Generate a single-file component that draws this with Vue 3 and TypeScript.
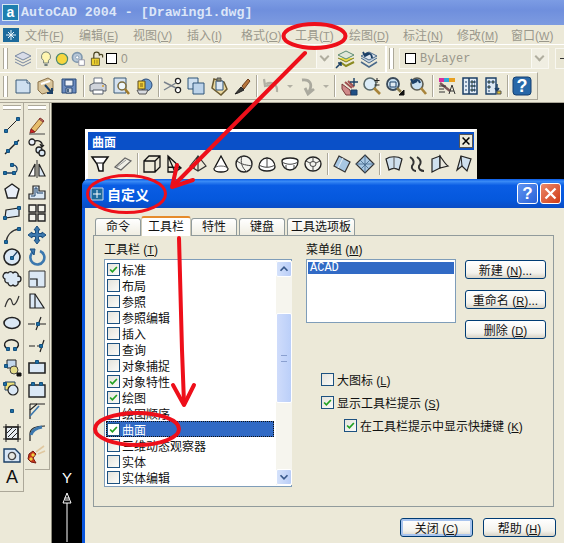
<script setup lang="ts">
import { h } from 'vue'

interface Shape {
  d?: string
  fill: string
  stroke: string
  w: number
  text?: string
}

// path helpers for the toolbar icons
const p = (d: string, fill = 'none', stroke = '#222', w = 1): Shape => ({ d, fill, stroke, w })
const c = (x: number, y: number, r: number) => `M${x - r} ${y}a${r} ${r} 0 1 0 ${r * 2} 0a${r} ${r} 0 1 0 ${-r * 2} 0z`
const n = (x: number, y: number): Shape => p(`M${x - 1.5} ${y - 1.5}h3v3h-3z`, '#1c6ea4', '#14507e')
const t = (text: string, fill: string): Shape => ({ text, fill, stroke: 'none', w: 0 })
const LIGHT = '#dbe8f5'
const NAVY = '#1b3f66'

const icons: Record<string, Shape[]> = {
  layers: [p('M2 13L10 17L18 13', 'none', '#7888a0'), p('M2 10L10 14L18 10', 'none', '#7888a0'), p('M2 7L10 3L18 7L10 11Z', '#d8dce8', '#7888a0')],
  bulb: [p('M10 1a6 6 0 0 1 3 11v3H7v-3a6 6 0 0 1 3-11z', '#fff6b0', '#566'), p('M8 17.5h4', 'none', '#566', 2)],
  sun: [p(c(10, 10, 7), '#f6d63e', '#4f8a70', 1.5)],
  freeze: [p(c(9, 8, 6), '#b8c8d8', '#7f97ad', 2), p(c(9, 8, 2), '#fff', '#7f97ad'), p('M11 11h7v7h-7z', '#fff', '#889')],
  lock: [p('M3 9h10v9H3z', '#efd22e', '#4a4420'), p('M6 9V5a3 3 0 0 1 7 0a3 3 0 0 1 4 0v3', 'none', '#4a4420', 1.5), p('M7 11v5M10 11v5', 'none', '#8a7a20')],
  layerSet: [p('M5 13L11 17L19 13', 'none', '#8a8a20', 2), p('M3 9L11 13L19 9', '#eadb44', '#7a7a20'), p('M3 6L11 2L19 6L11 10Z', '#e0e6d8', '#5a8a70'), p('M1 19L6 14M3 14H6V17', 'none', NAVY, 1.5)],
  layerPrev: [p('M2 13L10 18L18 13', 'none', '#4a6a8a', 1.5), p('M2 9L10 14L18 9', '#c5d3e0', '#4a6a8a'), p('M2 7L10 3L18 7L10 11Z', '#dfe6ee', '#4a6a8a'), p('M13 9C13 4 8 3 6 6M4 3L6 7L10 5', 'none', NAVY, 1.8)],
  newDoc: [p('M3 4H14L17 7V17H3Z', '#cfe0f0', '#3a5a78'), p('M14 4V7H17', '#fff', '#3a5a78')],
  open: [p('M2 6L12 2L17 5V15L6 18L2 14Z', '#d8c49a', '#8a7048'), p('M5 8L14 5', 'none', '#fff', 2), p('M9 9L16 17M16 12V17H11', 'none', NAVY, 2)],
  save: [p('M3 3H17V17H3Z', '#6c8cc0', '#2a4a78'), p('M6 4H14V10H6Z', '#eef2f8', '#2a4a78'), p('M7 12H13V17H7Z', '#cdd6e2', '#2a4a78'), p('M9 13v3', 'none', NAVY, 1.5)],
  print: [p('M6 2H14V8H6Z', '#fff', '#6a7484'), p('M2 9L6 7H14L18 9V15H2Z', '#cfd3da', '#565e6a'), p('M5 14H15V18H5Z', '#fff', '#565e6a'), p('M14 10h2', 'none', '#d8a030', 1.5)],
  preview: [p('M3 2H15V17H3Z', '#d5e2ef', '#3a5a78'), p(c(11, 10, 4), '#eef6fb', '#7a6a3a', 1.5), p('M14 13L18 18', 'none', '#a07a2a', 2.5)],
  publish: [p(c(12, 9, 6), '#6c9cd0', '#2a4a78'), p('M4 5H11V13H4Z', '#f0cf3a', '#5a4a20'), p('M3 14H14L12 18H5Z', '#d8dbe0', '#555'), p('M6 8h3M6 10h3', 'none', '#7a5a10')],
  cut: [p(c(15, 5, 2.6), '#fff', '#222', 1.3), p(c(15, 14, 2.6), '#fff', '#222', 1.3), p('M1 6L13 12M1 14L13 7', 'none', '#7a828c', 1.4)],
  copy: [p('M2 2H12V13H2Z', '#cfe0f0', '#2f5578'), p('M7 7H18V18H7Z', '#bcd3ea', '#2f5578')],
  paste: [p('M5 3L15 6L18 13L12 19L3 12Z', '#ecd9a0', '#6a5a30', 1.5), p('M7 5H14V14H7Z', '#dce8f3', '#2f5578'), p('M8 2h4v3H8z', '#8a8a70', '#555')],
  match: [p('M3 18L9 11L12 14L6 17Z', '#3a3a38', '#222'), p('M10 10L16 3L18 5L12 13Z', '#b8763a', '#6a3a1a')],
  undoGrey: [p('M16 16C17 8 10 5 5 8M3 3L4 10L11 9', 'none', '#b2b0a4', 2.2)],
  redoGrey: [p('M5 4C13 3 16 8 12 16M8 12L11 18L17 13', 'none', '#aaa99e', 2.8)],
  pan: [p('M3 8L11 14L12 19H7L3 13Z', '#d08a8a', '#7a3a3a'), p('M6 6L13 12M9 5L15 11', 'none', '#a05050', 2), p('M15 2v8M11 6h8', 'none', NAVY, 1.4), p('M12 14h6v5h-6z', '#1f4f86', NAVY)],
  zoomRt: [p(c(8, 8, 6), '#dcecf7', '#5a6a6a', 1.6), p('M12 12L18 18', 'none', '#a8843a', 2.6), p('M15 2v5M12.5 4.5h5M12.5 9h5', 'none', '#222', 1)],
  zoomWin: [p(c(8, 8, 6), '#c8dff0', '#3a4a5a', 1.8), p('M5 6h6v5H5z', '#dfeaf2', '#1b3f66'), p('M12 12L16 16', 'none', '#8a7a4a', 2.5), p('M14 19L19 14V19Z', '#111', '#111')],
  zoomPrev: [p(c(9, 8, 6), '#c8dff0', '#5a5a50', 1.6), p('M13 12L18 18', 'none', '#a8843a', 2.6), p('M12 7C11 3 7 3 5 6M3 3L5 7L9 5', 'none', NAVY, 2)],
  props: [p('M2 2H7V6H2Z', '#d82ea0', 'none'), p('M7 2H12V6H7Z', '#2ea8d8', 'none'), p('M12 2H18V6H12Z', '#e8a020', 'none'), p('M3 7L13 15', 'none', '#7a5a5a', 2.5), p('M2 10h7M2 13h5M2 16h6', 'none', '#333'), p('M12 18L15 9L18 18M13 15h4', 'none', '#333')],
  dc: [p('M3 2H17V18H3Z', '#e4edf6', NAVY, 1.5), p('M9 2V18', 'none', NAVY, 1.5), p('M11 5h2v2h-2zM14 5h1v2h-1zM11 9h2v2h-2zM14 9h1v2h-1zM11 13h2v2h-2zM14 13h1v2h-1zM5 6h2M5 10h2M5 14h2', '#e0c030', NAVY)],
  tools: [p('M3 2H13V18H3Z', '#dde8f2', NAVY, 1.4), p('M5 5h2v2H5zM9 5h2v2H9zM5 10h2v2H5zM5 15h2', '#cbb030', NAVY), p('M14 8v6M12 12l2 3l2-3', 'none', NAVY, 1.5), p('M14 15h4v3h-4z', '#e0c030', '#555')],
  help: [p('M4 1H16Q19 1 19 4V16Q19 19 16 19H4Q1 19 1 16V4Q1 1 4 1Z', '#2868a8', '#143f70'), t('?', '#fff')],

  line: [p('M4 16L16 4'), n(4, 16), n(16, 4)],
  xline: [p('M3 17L17 3', 'none', '#222', 1.5), n(6, 14), n(14, 6)],
  pline: [p('M3 14H12A4 4 0 1 0 10 6', 'none', NAVY, 1.3), n(3, 14), n(12, 14), n(10, 6)],
  polygon: [p('M10 3L17 8L14.5 17H5.5L3 8Z', '#e8eef8', '#222', 1.4)],
  rect: [p('M4 7L17 5V13L3 15Z', LIGHT, '#222', 1.2), n(3, 15), n(17, 5)],
  arc: [p('M4 17C5 10 10 5 17 4', 'none', '#333', 1.4), n(4, 17), n(17, 4)],
  circle: [p(c(10, 10, 8), LIGHT, '#222', 1.6), p('M10 11L15 5', 'none', NAVY, 1.2), n(10, 11)],
  cloud: [p('M6 4a3 3 0 0 1 5 0a3 3 0 0 1 5 3a3 3 0 0 1 0 6a3 3 0 0 1-5 3a3 3 0 0 1-5-2a3 3 0 0 1-3-4a3 3 0 0 1 3-6z', LIGHT, '#222', 1.3)],
  spline: [p('M3 16C6 6 9 6 10 11S14 14 17 5', 'none', '#333', 1.2)],
  ellipse: [p('M2 10a8 5.5 0 1 0 16 0a8 5.5 0 1 0-16 0z', LIGHT, '#222', 1.6)],
  ellipseArc: [p('M6 14A7 5 0 1 1 13 14', 'none', '#222', 1.5), n(6, 14), n(13, 14)],
  insert: [p('M5 3H14V11H5Z', '#c3d8ec', '#222'), p(c(12, 13, 4), '#e4dc88', '#444'), n(4, 9), p('M15 16h4v3h-4z', '#111', '#111')],
  block: [p('M3 3H13V11H3Z', '#f0e27a', NAVY), p(c(11, 11, 5), LIGHT, '#222', 1.2), n(3, 5)],
  point: [n(10, 10)],
  hatch: [p('M4 4H16V16H4Z', '#e6ecf2', '#222', 1.5), p('M6 14L14 6M5 10L10 5M10 15L15 10M1 4H19M1 16H19M4 1V19M16 1V19', 'none', '#222', 1)],
  region: [p('M2 4H13L18 9V17H2Z', '#d8e6f5', NAVY, 1.4), p(c(10, 11, 3.6), '#e6e6e0', '#444', 1.4)],
  text: [t('A', '#111')],

  erase: [p('M4 14L13 3L17 6L8 17Z', '#e6bd6a', '#8a5a2a'), p('M12 4L16 7L17 6L13 3Z', '#d07a70', '#8a3a3a'), p('M4 14L8 17L3 18Z', '#d82020', '#8a2020'), p('M2 19H18', 'none', '#444')],
  copyObj: [p(c(5, 5, 3), '#e8eef8', '#222', 1.3), p(c(12, 13, 3), LIGHT, '#222', 1.3), p(c(15, 16, 3), LIGHT, '#222', 1.3), p('M8 4C12 3 16 5 15 9M13 7l2 3l2-2', 'none', '#222', 1.3)],
  mirror: [p('M8 5V17H2Z', '#fff', '#222', 1.2), p('M12 5V17H18Z', LIGHT, '#222', 1.2), p('M10 1V19', 'none', '#333', 1)],
  offset: [p('M2 18V13H6V5H12V10H18V18Z', LIGHT, '#222', 1.2), p('M4 15H8V7H10V12H16', 'none', NAVY, 1)],
  array: [p('M2 2H9V9H2ZM11 2H18V9H11ZM2 11H9V18H2ZM11 11H18V18H11Z', '#f2f2ea', '#222', 1.4)],
  move: [p('M10 1L13 5H11.5V8.5H15V7L19 10L15 13V11.5H11.5V15H13L10 19L7 15H8.5V11.5H5V13L1 10L5 7V8.5H8.5V5H7Z', '#3c78ae', '#1b4f80')],
  rotate: [p('M6 5A7 7 0 1 0 13 4', 'none', '#3c78ae', 2.6), p('M3 2L8 2L7 8Z', '#3c78ae', '#1b4f80')],
  scale: [p('M2 2H18V18H2Z', LIGHT, '#333', 1), p('M3 10H10V17', 'none', '#111', 1.2)],
  stretch: [p('M3 3H8L17 17H3Z', LIGHT, '#222', 1.2), p('M8 3V17', 'none', '#222', 1.2)],
  trim: [p('M1 11H8M12 11H19M9 17L14 4', 'none', '#222', 1.2), n(11, 11)],
  extendLine: [p('M2 11H8M10 11H12', 'none', '#222', 1.2), p('M13 17L17 5', 'none', '#222', 1.2), n(14, 11)],
  breakOne: [p('M2 6H18V16H2Z', LIGHT, '#222', 1.6), n(10, 5)],
  breakTwo: [p('M2 6H18V18H2Z', LIGHT, '#222', 1.4), n(6, 5), n(14, 5)],
  chamfer: [p('M3 18V9L10 3H18', 'none', '#222', 1.2), p('M3 3H10M3 3V9', 'none', '#111', 1), p('M3 15L12 5', 'none', '#3c78ae', 1.6)],
  fillet: [p('M3 18V11C3 6 8 3 18 3', 'none', '#222', 1.2), p('M4 12C5 8 9 5 15 4', 'none', '#3c78ae', 3)],
  explode: [p('M2 9L6 6L9 9L6 13L9 18L4 17L1 14Z', '#c8381c', '#7a1a10'), p('M9 7L17 1M11 9L18 6', 'none', '#e0c8a0', 1.6), p('M5 9h2v2H5zM3 13h2v2H3z', '#f0d040', '#f0d040')],

  sFunnel: [p('M2 3H18L13 10V17H9L7 10Z', '#fff', '#111', 1.5), p('M7 9H13', 'none', '#111')],
  sPlane: [p('M2 13L12 4L18 7L8 16Z', '#efefe6', '#666', 1.2), p('M4 13L13 6', 'none', '#999')],
  sBox: [p('M2 7H13V18H2ZM2 7L7 2H18V13L13 18M13 7L18 2', 'none', '#111', 1.3)],
  sWedge: [p('M3 2L16 14L10 18H3ZM3 2L10 18M3 13L16 14', 'none', '#111', 1.3)],
  sPyramid: [p('M10 2L2 12L10 17L18 12ZM10 2L10 17M10 2L6 14', 'none', '#333', 1.2)],
  sCone: [p('M10 2L3 15A7 3 0 0 0 17 15Z', '#fff', '#111', 1.3), p('M3 15A7 3 0 0 1 17 15', 'none', '#666')],
  sSphere: [p(c(10, 10, 8), '#f4f4ee', '#222', 1.4), p('M3 7C8 11 13 11 18 12M8 2C6 8 8 14 13 18', 'none', '#444')],
  sDome: [p('M2 13A8 9 0 0 1 18 13A8 4 0 0 1 2 13Z', '#fff', '#222', 1.4), p('M2 11C7 14 13 14 18 11M10 3V13', 'none', '#444')],
  sBowl: [p('M2 7A8 3 0 0 1 18 7C18 13 14 16 10 16S2 13 2 7Z', '#fff', '#222', 1.4), p('M2 8C7 11 13 11 18 8M6 11V15M14 11V15', 'none', '#444')],
  sTorus: [p('M2 10a8 7 0 1 0 16 0a8 7 0 1 0-16 0z', '#f4f4ee', '#222', 1.4), p('M7 10a3 2.5 0 1 0 6 0a3 2.5 0 1 0-6 0zM3 7L7 9M17 7L13 9M10 3V7M10 13V17', 'none', '#444')],
  sMesh: [p('M7 2L18 8L13 18L2 12Z', '#a8c8e4', '#333', 1.2), p('M11 4L6 14', 'none', '#e8f0f8')],
  sMesh3: [p('M10 1L19 10L10 19L1 10Z', '#a8c8e4', '#333', 1.2), p('M5 6L14 15M6 15L15 6M10 1V19M1 10H19', 'none', '#44688c', 0.8)],
  sRev: [p('M2 5C6 2 14 2 18 5L15 16C12 14 8 14 5 16Z', '#cfe0ee', '#222', 1.2), p('M10 3V15', 'none', '#555')],
  sTab: [p('M3 3C8 6 7 10 5 12C4 15 7 17 9 17M10 3C15 6 14 10 12 12C11 15 14 17 17 17', 'none', '#333', 2)],
  sRule: [p('M2 5L10 2L10 14L2 18Z', '#cfe0ee', '#222', 1.2), p('M10 2C13 6 15 10 18 12L10 14Z', '#e8e8de', '#222', 1.2)],
  sEdge: [p('M8 2L18 5L14 17L9 12L4 16Z', '#cfe0ee', '#222', 1.2), p('M8 2L9 12', 'none', '#222')],
}

const Ico = (props: { name: string }) =>
  h('svg', { viewBox: '0 0 20 20', width: 20, height: 20 }, (icons[props.name] ?? []).map((s) =>
    s.text !== undefined
      ? h('text', { x: 10, y: 16, 'text-anchor': 'middle', fill: s.fill, 'font-size': 18, 'font-family': '"Liberation Sans", sans-serif', 'font-weight': s.text === '?' ? 700 : 400 }, s.text)
      : h('path', { d: s.d, fill: s.fill, stroke: s.stroke, 'stroke-width': s.w }),
  ))

const menus = [
  ['文件', 'F'], ['编辑', 'E'], ['视图', 'V'], ['插入', 'I'], ['格式', 'O'],
  ['工具', 'T'], ['绘图', 'D'], ['标注', 'N'], ['修改', 'M'], ['窗口', 'W'],
]

// '|' is a separator, '~' is one of the little dropdown arrows
const standardBar = [
  'newDoc', 'open', 'save', '|', 'print', 'preview', 'publish', '|', 'cut', 'copy', 'paste', 'match', '|',
  'undoGrey', '~', 'redoGrey', '~', '|', 'pan', 'zoomRt', 'zoomWin', 'zoomPrev', '|', 'props', 'dc', 'tools', '|', 'help',
]
const surfaceBar = [
  'sFunnel', 'sPlane', '|', 'sBox', 'sWedge', 'sPyramid', 'sCone', 'sSphere', 'sDome', 'sBowl', 'sTorus', '|',
  'sMesh', 'sMesh3', '|', 'sRev', 'sTab', 'sRule', 'sEdge',
]
const drawBar = ['line', 'xline', 'pline', 'polygon', 'rect', 'arc', 'circle', 'cloud', 'spline', 'ellipse', 'ellipseArc', 'insert', 'block', 'point', 'hatch', 'region', 'text']
const modifyBar = ['erase', 'copyObj', 'mirror', 'offset', 'array', 'move', 'rotate', 'scale', 'stretch', 'trim', 'extendLine', 'breakOne', 'breakTwo', 'chamfer', 'fillet', 'explode']

const toolbars = [
  { name: '标准', on: true }, { name: '布局', on: false }, { name: '参照', on: false },
  { name: '参照编辑', on: false }, { name: '插入', on: false }, { name: '查询', on: false },
  { name: '对象捕捉', on: false }, { name: '对象特性', on: true }, { name: '绘图', on: true },
  { name: '绘图顺序', on: false }, { name: '曲面', on: true, selected: true }, { name: '三维动态观察器', on: false },
  { name: '实体', on: false }, { name: '实体编辑', on: false },
]

const tabs = ['命令', '工具栏', '特性', '键盘', '工具选项板']

const sideButtons = [
  { label: '新建', key: 'N', dots: true },
  { label: '重命名', key: 'R', dots: true },
  { label: '删除', key: 'D', dots: false },
]

const options = [
  { label: '大图标', key: 'L', on: false, nested: false },
  { label: '显示工具栏提示', key: 'S', on: true, nested: false },
  { label: '在工具栏提示中显示快捷键', key: 'K', on: true, nested: true },
]
</script>

<template>
  <div class="app">
    <div class="titlebar">
      <span class="app-logo">a</span>
      <span class="app-title">AutoCAD 2004 - [Drawing1.dwg]</span>
    </div>

    <div class="menubar">
      <span class="menu-logo">
        <svg viewBox="0 0 16 16" width="16" height="16">
          <path d="M0 1H16V15H0Z" fill="#1c6a9c" />
          <path d="M8 3V13M3 8H13M5 5L11 11M11 5L5 11" stroke="#eaf4fa" fill="none" />
        </svg>
      </span>
      <span v-for="m in menus" :key="m[1]" class="menu-item">{{ m[0] }}(<u>{{ m[1] }}</u>)</span>
    </div>

    <div class="layer-row">
      <span class="grip"></span>
      <Ico name="layers" class="first-icon" />
      <div class="combo layer-combo">
        <Ico name="bulb" class="small" />
        <Ico name="sun" class="small" />
        <Ico name="freeze" class="small" />
        <Ico name="lock" class="small lock" />
        <span class="swatch"></span>
        <span class="combo-text">0</span>
        <span class="combo-arrow"><i></i></span>
      </div>
      <Ico name="layerSet" class="after-combo" />
      <Ico name="layerPrev" class="after-set" />
      <span class="bar-end"></span>
      <span class="grip second"></span>
      <div class="combo color-combo">
        <span class="swatch"></span>
        <span class="combo-text bylayer">ByLayer</span>
        <span class="combo-arrow"><i></i></span>
      </div>
      <div class="combo rest-combo"><span class="line-sample"></span></div>
    </div>

    <div class="standard-row">
      <div class="standard-bar">
        <span class="grip"></span>
        <div class="icon-strip first">
          <template v-for="(name, i) in standardBar" :key="i">
            <span v-if="name === '|'" class="sep"></span>
            <span v-else-if="name === '~'" class="drop"></span>
            <Ico v-else :name="name" />
          </template>
        </div>
      </div>
    </div>

    <div class="workspace">
      <div class="dock">
        <div class="dock-bar draw">
          <span class="dock-grip"></span>
          <Ico v-for="name in drawBar" :key="name" :name="name" />
        </div>
        <div class="dock-bar modify">
          <span class="dock-grip"></span>
          <Ico v-for="name in modifyBar" :key="name" :name="name" />
        </div>
      </div>

      <div class="canvas">
        <div class="float-bar">
          <div class="float-title">
            <span>曲面</span>
            <span class="float-close">
              <svg viewBox="0 0 14 14" width="12" height="12"><path d="M3 3L11 11M11 3L3 11" stroke="#000" stroke-width="1.8" /></svg>
            </span>
          </div>
          <div class="icon-strip surface">
            <template v-for="(name, i) in surfaceBar" :key="i">
              <span v-if="name === '|'" class="sep"></span>
              <Ico v-else :name="name" />
            </template>
          </div>
        </div>

        <div class="dialog">
          <div class="dialog-title">
            <span class="dialog-icon">
              <svg viewBox="0 0 14 14" width="14" height="14">
                <path d="M1 1H13V13H1Z" fill="#1c6a9c" stroke="#c8d8e8" />
                <path d="M7 3V11M3 7H11" stroke="#fff" />
              </svg>
            </span>
            <span class="dialog-name">自定义</span>
            <span class="cap-btn help">?</span>
            <span class="cap-btn close">
              <svg viewBox="0 0 21 21" width="19" height="19"><path d="M5 5L16 16M16 5L5 16" stroke="#fff" stroke-width="2.6" /></svg>
            </span>
          </div>

          <div class="dialog-body">
            <div class="tabs">
              <span v-for="(tab, i) in tabs" :key="tab" class="tab" :class="[`tab-${i}`, { active: i === 1 }]">{{ tab }}</span>
            </div>

            <div class="panel">
              <div class="left-col">
                <div class="label">工具栏 (<u>T</u>)</div>
                <div class="bars-list">
                  <div class="rows">
                    <div v-for="row in toolbars" :key="row.name" class="row" :class="{ selected: row.selected }">
                      <span class="check">
                        <svg v-if="row.on" viewBox="0 0 13 13" width="11" height="11"><path d="M2.5 6.5L5.2 9.2L10.5 3.5" fill="none" stroke="#21a121" stroke-width="2" /></svg>
                      </span>
                      <span class="row-name">{{ row.name }}</span>
                    </div>
                  </div>
                  <div class="scroll">
                    <span class="scroll-btn">
                      <svg viewBox="0 0 16 16" width="14" height="14"><path d="M4 10L8 6L12 10" fill="none" stroke="#3a5a8c" stroke-width="2" /></svg>
                    </span>
                    <span class="thumb"><i></i></span>
                    <span class="scroll-btn">
                      <svg viewBox="0 0 16 16" width="14" height="14"><path d="M4 6L8 10L12 6" fill="none" stroke="#3a5a8c" stroke-width="2" /></svg>
                    </span>
                  </div>
                </div>
              </div>

              <div class="right-col">
                <div class="label">菜单组 (<u>M</u>)</div>
                <div class="group-area">
                  <div class="group-list"><div class="group-row">ACAD</div></div>
                  <div class="side-btns">
                    <button v-for="b in sideButtons" :key="b.key" class="btn">{{ b.label }} (<u>{{ b.key }}</u>){{ b.dots ? '...' : '' }}</button>
                  </div>
                </div>
                <div class="options">
                  <label v-for="o in options" :key="o.key" class="option" :class="{ nested: o.nested }">
                    <span class="check">
                      <svg v-if="o.on" viewBox="0 0 13 13" width="11" height="11"><path d="M2.5 6.5L5.2 9.2L10.5 3.5" fill="none" stroke="#21a121" stroke-width="2" /></svg>
                    </span>
                    <span>{{ o.label }} (<u>{{ o.key }}</u>)</span>
                  </label>
                </div>
              </div>
            </div>

            <div class="dialog-footer">
              <button class="btn wide default">关闭 (<u>C</u>)</button>
              <button class="btn wide">帮助 (<u>H</u>)</button>
            </div>
          </div>
        </div>

        <div class="ucs">
          <span class="ucs-y">Y</span>
          <svg viewBox="0 0 12 50" width="12" height="50">
            <path d="M6 1L2 11H10ZM4 8H8M3.5 6H8.5" fill="none" stroke="#fff" />
            <path d="M6 11V50" stroke="#fff" />
          </svg>
        </div>
      </div>
    </div>

    <!-- red hand-drawn notes on top of the screenshot -->
    <svg class="notes" viewBox="0 0 564 543" width="564" height="543">
      <g fill="none" stroke="#ee0f1a" stroke-linecap="round" stroke-linejoin="round">
        <ellipse cx="314.5" cy="36" rx="31" ry="12" stroke-width="4" />
        <path d="M305 53L176 183" stroke-width="4" />
        <path d="M177 165L172 187L193 180" stroke-width="4" />
        <ellipse cx="126.5" cy="194" rx="39" ry="18.5" stroke-width="3" />
        <path d="M179 238L182 350L184 403" stroke-width="4" />
        <path d="M173 385L184 405L194 385" stroke-width="4" />
        <ellipse cx="137" cy="429" rx="42" ry="16" stroke-width="4" />
      </g>
    </svg>
  </div>
</template>

<style scoped>
.app {
  position: relative;
  display: flex;
  flex-direction: column;
  width: 564px;
  height: 543px;
  overflow: hidden;
  background: #ece9d8;
  font-family: "Liberation Sans", "Noto Sans CJK SC", sans-serif;
  font-size: 12px;
  color: #111;
}

svg {
  display: block;
  flex: none;
}

.titlebar {
  display: flex;
  align-items: center;
  gap: 2px;
  height: 25px;
  padding-left: 2px;
  background: linear-gradient(#7c9ce4, #6f8fdd 40%, #7d9be0);
}

.app-logo {
  width: 15px;
  height: 15px;
  border: 1px solid #d8e8f0;
  background: #1f7faf;
  color: #fff;
  font: 700 14px/14px "Liberation Sans", sans-serif;
  text-align: center;
}

.app-title {
  font: 700 13.3px "Liberation Mono", monospace;
  color: #dce6f8;
}

.menubar {
  display: flex;
  align-items: center;
  height: 19px;
  padding-left: 3px;
  border-bottom: 1px solid #fff;
  color: #9a988c;
  box-sizing: content-box;
}

.menu-logo {
  width: 16px;
  margin-right: 6px;
}

.menu-item {
  width: 54px;
  flex: none;
  white-space: nowrap;
  font-size: 12px;
}

.menu-item u,
.label u,
.btn u,
.option u {
  font-size: 11px;
}

.layer-row {
  display: flex;
  align-items: center;
  height: 27px;
  flex: none;
}

.grip {
  flex: none;
  width: 3px;
  height: 21px;
  margin-left: 3px;
  border-left: 1px solid #aca899;
  border-right: 1px solid #aca899;
  background: #fff;
}

.first-icon {
  margin-left: 5px;
}

.combo {
  position: relative;
  display: flex;
  align-items: center;
  flex: none;
  height: 21px;
  box-sizing: border-box;
  border: 1px solid #f8f7f0;
  background: #e9e6d4;
}

.layer-combo {
  width: 298px;
  margin-left: 3px;
  padding-left: 1px;
}

.small {
  width: 16px;
  height: 16px;
}

.lock {
  margin-left: 3px;
}

.swatch {
  flex: none;
  width: 9px;
  height: 9px;
  margin-left: 1px;
  border: 1px solid #000;
  background: #fff;
}

.combo-text {
  margin-left: 4px;
  color: #99978b;
  font-size: 12px;
}

.bylayer {
  font: 12px "Liberation Mono", monospace;
}

.combo-arrow {
  position: absolute;
  top: 0;
  right: 0;
  bottom: 0;
  width: 16px;
  background: #f0eee2;
  border-left: 1px solid #fafaf4;
}

.combo-arrow i {
  position: absolute;
  left: 4px;
  top: 4px;
  width: 5px;
  height: 5px;
  border-right: 2px solid #b0ae9f;
  border-bottom: 2px solid #b0ae9f;
  transform: rotate(45deg);
}

.after-combo {
  margin-left: 1px;
}

.after-set {
  margin-left: 4px;
}

.bar-end {
  flex: none;
  width: 2px;
  height: 26px;
  margin-left: 6px;
  background: #fff;
}

.grip.second {
  margin-left: 2px;
}

.color-combo {
  width: 150px;
  margin-left: 5px;
  padding-left: 4px;
}

.rest-combo {
  flex: 1;
  margin-left: 6px;
}

.line-sample {
  width: 6px;
  height: 1px;
  margin-left: 4px;
  background: #333;
}

.standard-row {
  flex: none;
  height: 30px;
  border-bottom: 1px solid #aca899;
}

.standard-bar {
  display: flex;
  align-items: center;
  width: 538px;
  height: 28px;
  box-sizing: border-box;
  border-right: 1px solid #aca899;
  border-bottom: 1px solid #aca899;
  border-top: 1px solid #fff;
}

.icon-strip {
  display: flex;
  align-items: center;
  gap: 3px;
}

.icon-strip.first {
  margin-left: 5px;
}

.sep {
  flex: none;
  width: 1px;
  height: 22px;
  margin: 0 1px;
  background: #aca899;
  box-shadow: 1px 0 0 #fff;
}

.drop {
  flex: none;
  width: 10px;
  height: 20px;
  position: relative;
}

.drop::after {
  content: "";
  position: absolute;
  left: 3px;
  top: 9px;
  border: 3px solid transparent;
  border-top-color: #b2b0a4;
}

.workspace {
  flex: 1;
  display: flex;
  min-height: 0;
}

.dock {
  display: flex;
  align-items: flex-start;
  flex: none;
  width: 52px;
  box-sizing: border-box;
  border-right: 1px solid #8c8a7c;
}

.dock-bar {
  display: flex;
  flex-direction: column;
  align-items: center;
  gap: 2px;
  box-sizing: border-box;
  border-right: 1px solid #aca899;
  border-bottom: 1px solid #aca899;
}

.dock-bar.draw {
  width: 24px;
  height: 389px;
}

.dock-bar.modify {
  width: 25px;
  height: 367px;
  margin-left: 1px;
}

.dock-grip {
  flex: none;
  width: 18px;
  height: 3px;
  margin: 2px 0 3px;
  border-top: 1px solid #aca899;
  border-bottom: 1px solid #aca899;
  background: #fff;
}

.canvas {
  position: relative;
  flex: 1;
  background: #000;
  overflow: hidden;
}

.float-bar {
  position: absolute;
  left: 33px;
  top: 26px;
  width: 392px;
  height: 52px;
  box-sizing: border-box;
  border: 3px solid #ece9d8;
  border-top-color: #fff;
  border-left-color: #fff;
  background: #ece9d8;
}

.float-title {
  display: flex;
  align-items: center;
  justify-content: space-between;
  height: 18px;
  padding-left: 4px;
  background: #0a50c8;
  color: #fff;
  font-weight: 700;
  font-size: 12px;
}

.float-close {
  display: flex;
  align-items: center;
  justify-content: center;
  width: 14px;
  height: 14px;
  margin-right: 1px;
  background: #ece9d8;
  border: 1px solid #555;
  box-sizing: border-box;
}

.icon-strip.surface {
  height: 28px;
  padding-left: 2px;
}

.dialog {
  position: absolute;
  left: 30px;
  top: 76px;
  width: 485px;
  height: 370px;
  box-sizing: border-box;
  padding: 0 3px;
  border-radius: 7px 0 0 0;
  background: #0855dd;
}

.dialog-title {
  display: flex;
  align-items: center;
  height: 29px;
  margin: 0 -3px;
  padding: 0 6px 0 8px;
  border-radius: 7px 7px 0 0;
  background: linear-gradient(#0a5ce6, #3a8bf6 8%, #0a5de4 22%, #0558dd 70%, #0a4cc4);
}

.dialog-icon {
  width: 14px;
  margin-right: 3px;
}

.dialog-name {
  flex: 1;
  color: #fff;
  font-size: 14px;
  font-weight: 700;
}

.cap-btn {
  display: flex;
  align-items: center;
  justify-content: center;
  width: 21px;
  height: 21px;
  box-sizing: border-box;
  border: 1px solid #fff;
  border-radius: 3px;
  color: #fff;
  font-size: 17px;
  font-weight: 700;
}

.cap-btn.help {
  margin-right: 2px;
  background: linear-gradient(135deg, #5f93f0, #2a62d8);
}

.cap-btn.close {
  background: linear-gradient(135deg, #ec8a6a, #cf3a16);
}

.dialog-body {
  height: 341px;
  padding: 0 10px 0 8px;
  background: #ece9d8;
}

.tabs {
  display: flex;
  align-items: flex-end;
  height: 28px;
  padding-left: 2px;
  margin-bottom: -1px;
}

.tab {
  position: relative;
  z-index: 1;
  flex: none;
  height: 16px;
  line-height: 16px;
  padding: 0 10px;
  border: 1px solid #919b9c;
  border-bottom: 0;
  border-radius: 3px 3px 0 0;
  background: linear-gradient(#fff, #f0eee2);
  margin-bottom: 1px;
}

.tab-3,
.tab-4 {
  margin-left: 2px;
}

.tab-4 {
  padding: 0 3px;
}

.tab.active {
  z-index: 2;
  height: 18px;
  line-height: 18px;
  padding: 0 6px;
  border: 1px solid #ccc9b8;
  border-top: 2px solid #e68b2c;
  border-bottom: 0;
  background: #fff;
  margin-bottom: 0;
}

.panel {
  display: flex;
  gap: 14px;
  width: 461px;
  height: 272px;
  box-sizing: border-box;
  padding: 7px 0 0 10px;
  background: #ece9d8;
  border: 1px solid #919b9c;
}

.label {
  height: 16px;
  line-height: 14px;
  font-size: 12px;
}

.left-col {
  width: 188px;
  flex: none;
}

.bars-list {
  display: flex;
  height: 228px;
  box-sizing: border-box;
  padding: 1px;
  border: 1px solid #7f9db9;
  background: #fff;
}

.rows {
  width: 168px;
  flex: none;
  overflow: hidden;
}

.row {
  display: flex;
  align-items: center;
  height: 16px;
  padding-left: 1px;
  font-size: 12px;
}

.row.selected {
  background: #316ac5;
  outline: 1px dotted #111;
  outline-offset: -1px;
}

.row.selected .row-name {
  color: #fff;
}

.check {
  display: flex;
  align-items: center;
  justify-content: center;
  flex: none;
  width: 13px;
  height: 13px;
  box-sizing: border-box;
  margin-right: 2px;
  border: 1px solid #1c5180;
  background: linear-gradient(135deg, #e4e3dc, #fbfbf8);
}

.row.selected .check {
  background: #fff;
}

.scroll {
  display: flex;
  flex-direction: column;
  justify-content: space-between;
  position: relative;
  width: 16px;
  margin-left: 2px;
  background: #f6f5ee;
}

.scroll-btn {
  flex: none;
  height: 16px;
  border: 1px solid #fff;
  box-sizing: border-box;
  border-radius: 2px;
  background: linear-gradient(90deg, #d5e2fb, #b9cdf7);
}

.thumb {
  position: absolute;
  left: 0;
  top: 52px;
  width: 16px;
  height: 90px;
  box-sizing: border-box;
  border: 1px solid #fff;
  border-radius: 2px;
  background: linear-gradient(90deg, #cfdcfb, #bbcff9);
}

.thumb i {
  position: absolute;
  left: 4px;
  top: 41px;
  width: 6px;
  height: 5px;
  border-top: 1px solid #8aa0d0;
  border-bottom: 1px solid #8aa0d0;
}

.right-col {
  flex: 1;
  min-width: 0;
}

.group-area {
  display: flex;
  gap: 9px;
  height: 81px;
}

.group-list {
  width: 150px;
  height: 64px;
  box-sizing: border-box;
  padding: 2px 1px;
  border: 1px solid #7f9db9;
  background: #fff;
}

.group-row {
  height: 12px;
  padding-left: 2px;
  background: #316ac5;
  color: #fff;
  font: 12px/12px "Liberation Mono", monospace;
}

.side-btns {
  display: flex;
  flex-direction: column;
  gap: 11px;
  width: 81px;
  padding-top: 1px;
}

.btn {
  height: 19px;
  padding: 0;
  box-sizing: border-box;
  border: 1px solid #003c74;
  border-radius: 3px;
  background: linear-gradient(#fff, #f3f2ec 70%, #d8d3c6);
  color: #111;
  font-family: inherit;
  font-size: 12px;
  white-space: nowrap;
}

.options {
  display: flex;
  flex-direction: column;
  gap: 9px;
  margin-top: 32px;
  padding-left: 15px;
}

.option {
  display: flex;
  align-items: center;
  height: 14px;
  font-size: 12px;
  white-space: nowrap;
}

.option.nested {
  padding-left: 23px;
}

.option .check {
  margin-right: 3px;
}

.dialog-footer {
  display: flex;
  justify-content: flex-end;
  gap: 10px;
  margin-right: -2px;
  padding-top: 11px;
}

.btn.wide {
  width: 73px;
}

.btn.default {
  box-shadow: inset 0 0 0 2px #a8c4ee;
}

.ucs {
  position: absolute;
  left: 6px;
  top: 366px;
  display: flex;
  flex-direction: column;
  align-items: center;
  width: 18px;
  color: #fff;
}

.ucs-y {
  height: 23px;
  font-size: 15px;
  line-height: 18px;
}

.notes {
  position: absolute;
  left: 0;
  top: 0;
  pointer-events: none;
}
</style>
